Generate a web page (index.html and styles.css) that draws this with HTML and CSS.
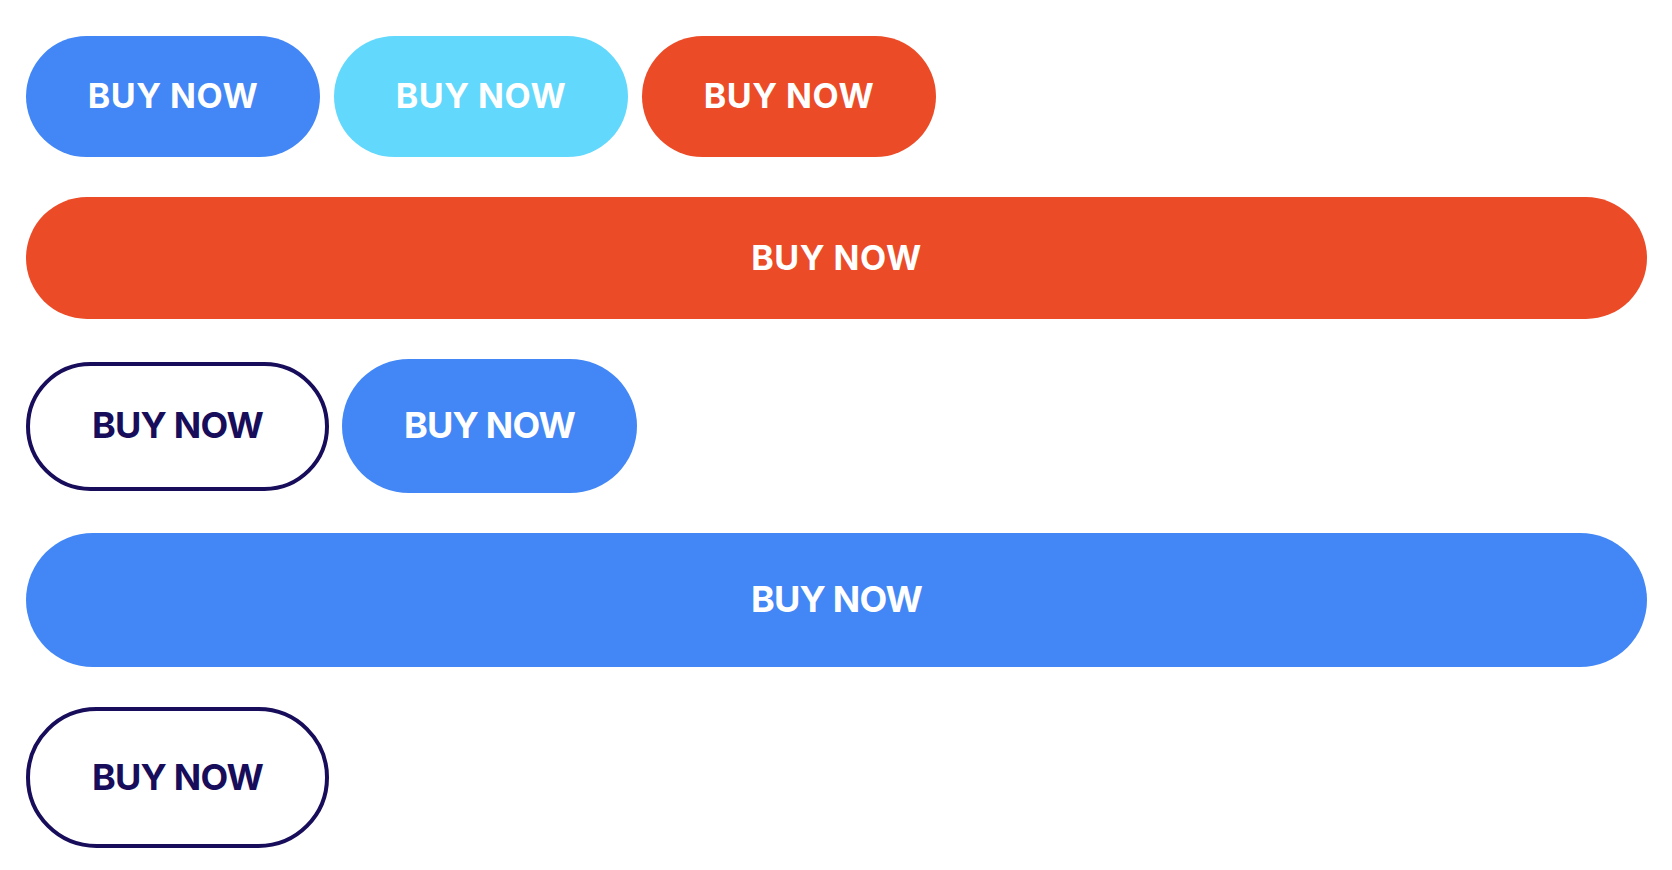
FILE: index.html
```html
<!DOCTYPE html>
<html lang="en">
<head>
<meta charset="utf-8">
<title>Buttons</title>
<link rel="stylesheet" href="styles.css">
</head>
<body>
<main class="page">
  <div class="row row-1">
    <button class="btn btn-sm btn-blue">BUY NOW</button>
    <button class="btn btn-sm btn-cyan">BUY NOW</button>
    <button class="btn btn-sm btn-red">BUY NOW</button>
  </div>
  <div class="row row-2">
    <button class="btn btn-full btn-red btn-full-sm">BUY NOW</button>
  </div>
  <div class="row row-3">
    <button class="btn btn-big-text btn-outline btn-outline-md">BUY NOW</button>
    <button class="btn btn-big-text btn-lg btn-blue">BUY NOW</button>
  </div>
  <div class="row row-4">
    <button class="btn btn-big-text btn-full btn-blue btn-full-lg">BUY NOW</button>
  </div>
  <div class="row row-5">
    <button class="btn btn-big-text btn-outline btn-outline-lg">BUY NOW</button>
  </div>
</main>
</body>
</html>
```

FILE: styles.css
```css
html, body {
  margin: 0;
  padding: 0;
  background: #ffffff;
}

.page {
  display: flex;
  flex-direction: column;
  gap: 40px;
  padding: 36px 25px 0 26px;
}

.row {
  display: flex;
  align-items: center;
  gap: 14px;
}

.row-3 {
  gap: 13px;
}

.btn {
  box-sizing: border-box;
  display: flex;
  align-items: center;
  justify-content: center;
  border: none;
  margin: 0;
  padding: 0 0 2px;
  border-radius: 999px;
  font-family: Inter, "Liberation Sans", sans-serif;
  font-weight: 700;
  font-size: 34px;
  letter-spacing: 0.5px;
  color: #ffffff;
  cursor: pointer;
}

.btn-big-text {
  font-size: 36px;
  letter-spacing: -0.8px;
}

.btn-sm {
  width: 294px;
  height: 121px;
}

.btn-lg {
  width: 295px;
  height: 134px;
}

.btn-full {
  width: 100%;
}

.btn-full-sm {
  height: 122px;
}

.btn-full-lg {
  height: 134px;
}

.btn-blue {
  background: #4287f5;
}

.btn-cyan {
  background: #62d8fc;
}

.btn-red {
  background: #eb4b27;
}

.btn-outline {
  width: 303px;
  background: #ffffff;
  border: 4px solid #170d5a;
  color: #170d5a;
}

.btn-outline-md {
  height: 129px;
}

.btn-outline-lg {
  height: 141px;
}
```
